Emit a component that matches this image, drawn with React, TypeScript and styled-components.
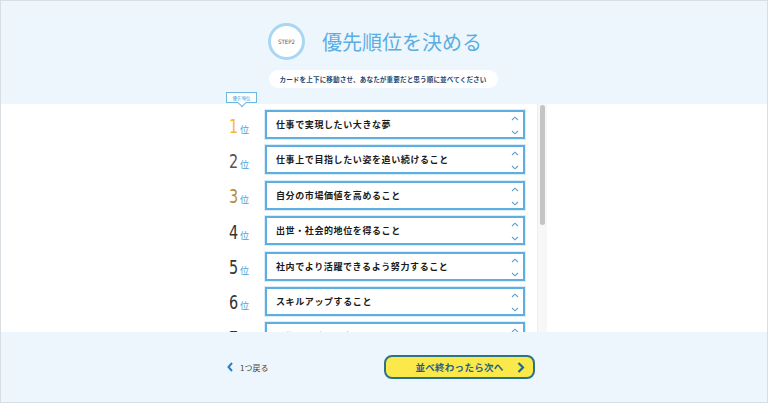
import styled, { createGlobalStyle } from "styled-components";

const GlobalStyle = createGlobalStyle`
    html, body {
        margin: 0;
        padding: 0;
    }
    body {
        width: 768px;
        height: 403px;
        overflow: hidden;
        background: #eef6fd;
        font-family: "Noto Sans CJK JP", "Noto Sans", sans-serif;
    }
`;

const Page = styled.div`
    width: 768px;
    height: 403px;
    box-sizing: border-box;
    border: 1px solid #d9dee3;
    display: flex;
    flex-direction: column;
    background: #eef6fd;
`;

const Header = styled.header`
    height: 103px;
    display: flex;
    flex-direction: column;
    align-items: center;
    padding-top: 22px;
    box-sizing: border-box;
`;

const TitleRow = styled.div`
    display: flex;
    align-items: center;
    gap: 17px;
    margin-left: -18px;
`;

const StepCircle = styled.div`
    width: 37px;
    height: 37px;
    box-sizing: border-box;
    border-radius: 50%;
    border: 3px solid #a9d6f2;
    background: #fff;
    display: flex;
    align-items: center;
    justify-content: center;
    font-family: "DejaVu Sans Condensed", "DejaVu Sans", sans-serif;
    font-size: 6px;
    color: #555;
`;

const Title = styled.h1`
    margin: 0;
    font-size: 20px;
    font-weight: 400;
    color: #5aaee2;
    line-height: 1;
`;

const Guide = styled.div`
    margin-top: 10px;
    margin-left: -2px;
    width: 229px;
    height: 18px;
    border-radius: 9px;
    background: #fff;
    display: flex;
    align-items: center;
    justify-content: center;
    font-size: 6.6px;
    font-weight: 700;
    color: #24476d;
    letter-spacing: 0.1px;
`;

const Main = styled.main`
    height: 228px;
    background: #fff;
    display: flex;
    justify-content: center;
`;

const ListWrap = styled.div`
    position: relative;
    width: 322px;
    margin-left: 4px;
    display: flex;
`;

const Badge = styled.div`
    position: absolute;
    left: 1px;
    top: -12px;
    width: 31px;
    height: 11px;
    box-sizing: border-box;
    border: 1.5px solid #6db7e4;
    background: #fff;
    display: flex;
    align-items: center;
    justify-content: center;
    font-size: 4.5px;
    color: #4a9fd8;
    z-index: 2;

    &::after {
        content: "";
        position: absolute;
        left: 12px;
        bottom: -4px;
        width: 5px;
        height: 5px;
        background: #fff;
        border-right: 1.5px solid #6db7e4;
        border-bottom: 1.5px solid #6db7e4;
        transform: rotate(45deg);
    }
`;

const List = styled.ol`
    flex: 1;
    margin: 0;
    padding: 6px 0 0 0;
    list-style: none;
    height: 228px;
    box-sizing: border-box;
    overflow: hidden;
`;

const ScrollTrack = styled.div`
    width: 10px;
    height: 100%;
    background: #f7f7f7;
    border-left: 1px solid #eeeeee;
    box-sizing: border-box;
    padding: 1px 0 0 2px;
`;

const ScrollThumb = styled.div`
    width: 5px;
    height: 120px;
    border-radius: 3px;
    background: #c4c4c4;
`;

const Row = styled.li`
    display: flex;
    align-items: center;
    height: 29px;
    margin-bottom: 6.4px;
    padding-right: 12px;
`;

const Rank = styled.div`
    width: 40px;
    display: flex;
    align-items: baseline;
    padding-left: 4px;
    padding-top: 2px;
    box-sizing: border-box;
`;

const RankNum = styled.span<{ $color: string }>`
    font-family: "DejaVu Sans Condensed", "DejaVu Sans", sans-serif;
    font-size: 20px;
    line-height: 1;
    color: ${(p) => p.$color};
    display: inline-block;
    transform: scaleX(0.8);
    transform-origin: left center;
    width: 10px;
`;

const RankUnit = styled.span`
    font-size: 9px;
    color: #4a9fd8;
    margin-left: 1px;
`;

const Card = styled.div`
    flex: 1;
    height: 29px;
    box-sizing: border-box;
    border: 2px solid #5eaee0;
    box-shadow: 0 0 0 1px #d9eefa;
    background: #fff;
    display: flex;
    align-items: center;
    justify-content: space-between;
    padding: 0 4px 0 9px;
`;

const CardText = styled.span`
    font-size: 9px;
    font-weight: 700;
    color: #1a1a1a;
    letter-spacing: 0.6px;
`;

const Arrows = styled.div`
    height: 100%;
    display: flex;
    flex-direction: column;
    justify-content: space-between;
    padding: 4px 0 2px;
    box-sizing: border-box;
`;

const Footer = styled.footer`
    flex: 1;
    display: flex;
    align-items: center;
    justify-content: center;
`;

const FooterInner = styled.div`
    width: 322px;
    margin-left: 2px;
    display: flex;
    align-items: center;
    justify-content: space-between;
    padding-right: 11px;
    box-sizing: border-box;
`;

const Back = styled.a`
    display: flex;
    align-items: center;
    gap: 7px;
    font-size: 8px;
    color: #444;
    text-decoration: none;
    padding-left: 3px;
`;

const NextButton = styled.button`
    width: 151px;
    height: 24px;
    border-radius: 8px;
    border: 2px solid #2b7389;
    background: #fbe84a;
    display: flex;
    align-items: center;
    justify-content: center;
    position: relative;
    padding: 0;
    font-family: "Noto Sans CJK JP", sans-serif;
    font-size: 9.5px;
    font-weight: 700;
    color: #1e5f8d;
    letter-spacing: 0.3px;

    svg {
        position: absolute;
        right: 8px;
        top: 5px;
    }
`;

const items = [
    "仕事で実現したい大きな夢",
    "仕事上で目指したい姿を追い続けること",
    "自分の市場価値を高めること",
    "出世・社会的地位を得ること",
    "社内でより活躍できるよう努力すること",
    "スキルアップすること",
    "家族との時間を大切にすること",
    "安定した収入を得ること",
    "人の役に立つこと",
    "新しいことに挑戦すること",
    "プライベートを充実させること",
    "仲間と協力して成果を出すこと",
];

const rankColor = (i: number) => {
    if (i === 0) return "#f6b735";
    if (i === 1) return "#555";
    if (i === 2) return "#b58d3e";
    return "#333";
};

function Chevron({ up }: { up?: boolean }) {
    return (
        <svg width="8" height="5" viewBox="0 0 8 5">
            <path
                d={up ? "M1 4 L4 1.2 L7 4" : "M1 1 L4 3.8 L7 1"}
                fill="none"
                stroke="#5f9fd0"
                strokeWidth="1.1"
            />
        </svg>
    );
}

function App() {
    return (
        <>
            <GlobalStyle />
            <Page>
                <Header>
                    <TitleRow>
                        <StepCircle>STEP2</StepCircle>
                        <Title>優先順位を決める</Title>
                    </TitleRow>
                    <Guide>カードを上下に移動させ、あなたが重要だと思う順に並べてください</Guide>
                </Header>
                <Main>
                    <ListWrap>
                        <Badge>優先順位</Badge>
                        <List>
                            {items.map((text, i) => (
                                <Row key={text}>
                                    <Rank>
                                        <RankNum $color={rankColor(i)}>{i + 1}</RankNum>
                                        <RankUnit>位</RankUnit>
                                    </Rank>
                                    <Card>
                                        <CardText>{text}</CardText>
                                        <Arrows>
                                            <Chevron up />
                                            <Chevron />
                                        </Arrows>
                                    </Card>
                                </Row>
                            ))}
                        </List>
                        <ScrollTrack>
                            <ScrollThumb />
                        </ScrollTrack>
                    </ListWrap>
                </Main>
                <Footer>
                    <FooterInner>
                        <Back href="#">
                            <svg width="6" height="10" viewBox="0 0 6 10">
                                <path d="M5 1 L1.5 5 L5 9" fill="none" stroke="#2d7fc1" strokeWidth="2" />
                            </svg>
                            1つ戻る
                        </Back>
                        <NextButton>
                            並べ終わったら次へ
                            <svg width="8" height="11" viewBox="0 0 8 11">
                                <path d="M1.5 1 L6 5.5 L1.5 10" fill="none" stroke="#1e6a8c" strokeWidth="2.2" />
                            </svg>
                        </NextButton>
                    </FooterInner>
                </Footer>
            </Page>
        </>
    );
}

export default App;
